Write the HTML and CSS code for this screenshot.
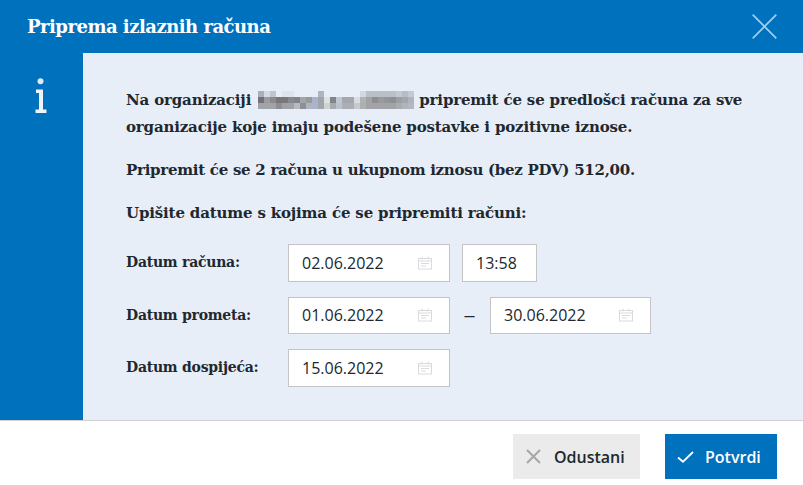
FILE: index.html
```html
<!DOCTYPE html>
<html lang="hr">
<head>
<meta charset="utf-8">
<title>Priprema izlaznih računa</title>
<link rel="stylesheet" href="styles.css">
</head>
<body>
<div class="dialog">
  <header class="head">
    <h1 class="title">Priprema izlaznih računa</h1>
    <svg class="close" width="25" height="25" viewBox="0 0 25 25"><path d="M.7.7l23.6 23.6M24.3.7L.7 24.3" fill="none" stroke="#a5cde6" stroke-width="1.7"/></svg>
  </header>
  <div class="main">
    <aside class="side">
      <svg width="12" height="36" viewBox="0 0 12 36"><circle cx="5.5" cy="3.2" r="3" fill="#dfeaf5"/><path d="M1 11.5h7v20h3.5v3.5H.5v-3.5H4V15H1z" fill="#eef4fa"/></svg>
    </aside>
    <section class="content">
      <p class="para">Na organizaciji <svg class="blur" width="156" height="18" viewBox="0 0 26 3" shape-rendering="crispEdges"><path fill="#a9b0b8" d="M0 0h1v1H0z"/><path fill="#d5d9e0" d="M1 0h1v1H1z"/><path fill="#c0c5cc" d="M2 0h1v1H2z"/><path fill="#dfe3ea" d="M4 0h2v1H4z"/><path fill="#b0b5ba" d="M10 0h1v1h-1z"/><path fill="#d4d7dd" d="M17 0h1v1h-1z"/><path fill="#bbbfc6" d="M18 0h5v1h-5z"/><path fill="#c4c8cf" d="M23 0h1v1h-1z"/><path fill="#b8bcc4" d="M24 0h1v1h-1z"/><path fill="#c5c9d1" d="M25 0h1v1h-1z"/><path fill="#74707a" d="M0 1h1v1H0z"/><path fill="#9a9ca2" d="M1 1h1v1H1z"/><path fill="#8b8a8f" d="M2 1h1v1H2z"/><path fill="#7a7679" d="M3 1h2v1H3z"/><path fill="#88888e" d="M5 1h1v1H5z"/><path fill="#7f848d" d="M6 1h1v1H6z"/><path fill="#a1a5ac" d="M7 1h1v1H7z"/><path fill="#9a9a96" d="M8 1h1v1H8z"/><path fill="#a8b4cc" d="M9 1h1v1H9z"/><path fill="#9fa5aa" d="M10 1h1v1h-1z"/><path fill="#dfe1e0" d="M11 1h1v1h-1z"/><path fill="#7f858a" d="M12 1h1v1h-1z"/><path fill="#c0c7d0" d="M13 1h1v1h-1z"/><path fill="#a4a7ab" d="M14 1h2v1h-2z"/><path fill="#d9dce2" d="M16 1h1v1h-1z"/><path fill="#b0b2b2" d="M17 1h1v1h-1z"/><path fill="#a1a3a5" d="M18 1h1v1h-1z"/><path fill="#8d8d92" d="M19 1h1v1h-1z"/><path fill="#9a9a9d" d="M20 1h1v1h-1z"/><path fill="#94959a" d="M21 1h1v1h-1z"/><path fill="#8d9196" d="M22 1h1v1h-1z"/><path fill="#9ca0a6" d="M23 1h1v1h-1z"/><path fill="#a3a7ac" d="M24 1h1v1h-1z"/><path fill="#b0b4be" d="M25 1h1v1h-1z"/><path fill="#a1a4a7" d="M0 2h3v1H0z"/><path fill="#8d8e92" d="M3 2h1v1H3z"/><path fill="#9ea1a6" d="M4 2h2v1H4z"/><path fill="#b5bbc0" d="M6 2h1v1H6z"/><path fill="#8e9094" d="M7 2h1v1H7z"/><path fill="#adb4c5" d="M8 2h2v1H8z"/><path fill="#a1a6aa" d="M10 2h1v1h-1z"/><path fill="#d0d3d2" d="M11 2h1v1h-1z"/><path fill="#a8abae" d="M12 2h1v1h-1z"/><path fill="#b8c2d0" d="M13 2h1v1h-1z"/><path fill="#abafb4" d="M14 2h2v1h-2z"/><path fill="#c5c9d0" d="M16 2h1v1h-1z"/><path fill="#adb0b0" d="M17 2h1v1h-1z"/><path fill="#a1a3a6" d="M18 2h5v1h-5z"/><path fill="#a8adb2" d="M23 2h1v1h-1z"/><path fill="#b0b4bc" d="M24 2h1v1h-1z"/><path fill="#b5b8c2" d="M25 2h1v1h-1z"/></svg> pripremit će se predlošci računa za sve<br>organizacije koje imaju podešene postavke i pozitivne iznose.</p>
      <p class="para tight">Pripremit će se 2 računa u ukupnom iznosu (bez PDV) 512,00.</p>
      <p class="para">Upišite datume s kojima će se pripremiti računi:</p>
      <div class="rows">
        <div class="row">
          <span class="label">Datum računa:</span>
          <div class="field"><span>02.06.2022</span><svg class="cal" width="14" height="14" viewBox="0 0 14 14"><use href="#cal"/></svg></div>
          <div class="field time"><span>13:58</span></div>
        </div>
        <div class="row">
          <span class="label">Datum prometa:</span>
          <div class="field"><span>01.06.2022</span><svg class="cal" width="14" height="14" viewBox="0 0 14 14"><use href="#cal"/></svg></div>
          <span class="dash">–</span>
          <div class="field end"><span>30.06.2022</span><svg class="cal" width="14" height="14" viewBox="0 0 14 14"><use href="#cal"/></svg></div>
        </div>
        <div class="row">
          <span class="label">Datum dospijeća:</span>
          <div class="field"><span>15.06.2022</span><svg class="cal" width="14" height="14" viewBox="0 0 14 14"><use href="#cal"/></svg></div>
        </div>
      </div>
    </section>
  </div>
  <footer class="foot">
    <button class="btn cancel"><svg width="15" height="15" viewBox="0 0 15 15"><path d="M1 1l13 13M14 1L1 14" fill="none" stroke="#a6a6a6" stroke-width="2"/></svg>Odustani</button>
    <button class="btn ok"><svg width="17" height="12" viewBox="0 0 17 12"><path d="M1 6.5l5 4.2L16 1" fill="none" stroke="#fff" stroke-width="1.8"/></svg>Potvrdi</button>
  </footer>
</div>
<svg class="defs" width="0" height="0"><defs><g id="cal" fill="none" stroke="#dadade" stroke-width="1"><rect x=".5" y="2.5" width="13" height="10.5"/><path d="M.5 5h13M3 7.5h8M3 10h5M4 .5v3M10 .5v3"/></g></defs></svg>
</body>
</html>
```
FILE: styles.css
```css
* { box-sizing: border-box; }
html, body { margin: 0; height: 100%; }
body { background: #fff; color: #20282f; font-family: "Open Sans", sans-serif; overflow: hidden; }
.dialog { width: 803px; height: 485px; display: flex; flex-direction: column; }
.head { height: 53px; flex: none; background: #0071bc; display: flex; align-items: center; justify-content: space-between; padding: 0 26px 0 27px; }
.title { margin: 1px 0 0; color: #fff; font: 700 18px/24px "DejaVu Serif", serif; letter-spacing: -0.5px; }
.main { height: 367px; flex: none; display: flex; }
.side { width: 83px; flex: none; background: #0071bc; display: flex; justify-content: center; padding-top: 25px; padding-right: 2px; }
.side svg { display: block; }
.content { flex: 1; background: #e8eef8; padding: 34px 0 0 43px; font: 700 15px/27px "DejaVu Serif", serif; }
.para { margin: 0 0 16px; letter-spacing: -0.16px; }
.para.tight { letter-spacing: -0.27px; }
.blur { vertical-align: -4px; margin-left: 2px; }
.rows { display: flex; flex-direction: column; gap: 15px; margin-top: 17px; }
.row { display: flex; align-items: center; height: 37.5px; }
.label { width: 162px; flex: none; font-size: 14px; letter-spacing: -0.25px; }
.field { width: 162px; height: 37.5px; background: #fff; border: 1px solid #c4c4c4; display: flex; align-items: center; justify-content: space-between; padding: 0 17px 0 13px; font: 400 16px/22px "Open Sans", sans-serif; }
.field.time { width: 75px; margin-left: 12px; }
.field.end { width: 161px; }
.dash { width: 40px; text-align: center; padding: 0 1px 3px 0; font: 300 24px/22px "Open Sans", sans-serif; }
.cal { display: block; }
.foot { flex: 1; border-top: 1px solid #d2d2d2; display: flex; justify-content: flex-end; gap: 25px; padding: 13px 26px 0 0; }
.btn { height: 45px; border: 0; display: flex; align-items: center; font: 600 16px/22px "Open Sans", sans-serif; padding: 0; }
.cancel { width: 127px; background: #ebebeb; color: #20282f; gap: 13px; padding-left: 13px; }
.ok { width: 112px; background: #0071bc; color: #fff; gap: 11px; padding-left: 12px; }
.defs { position: absolute; }
```
